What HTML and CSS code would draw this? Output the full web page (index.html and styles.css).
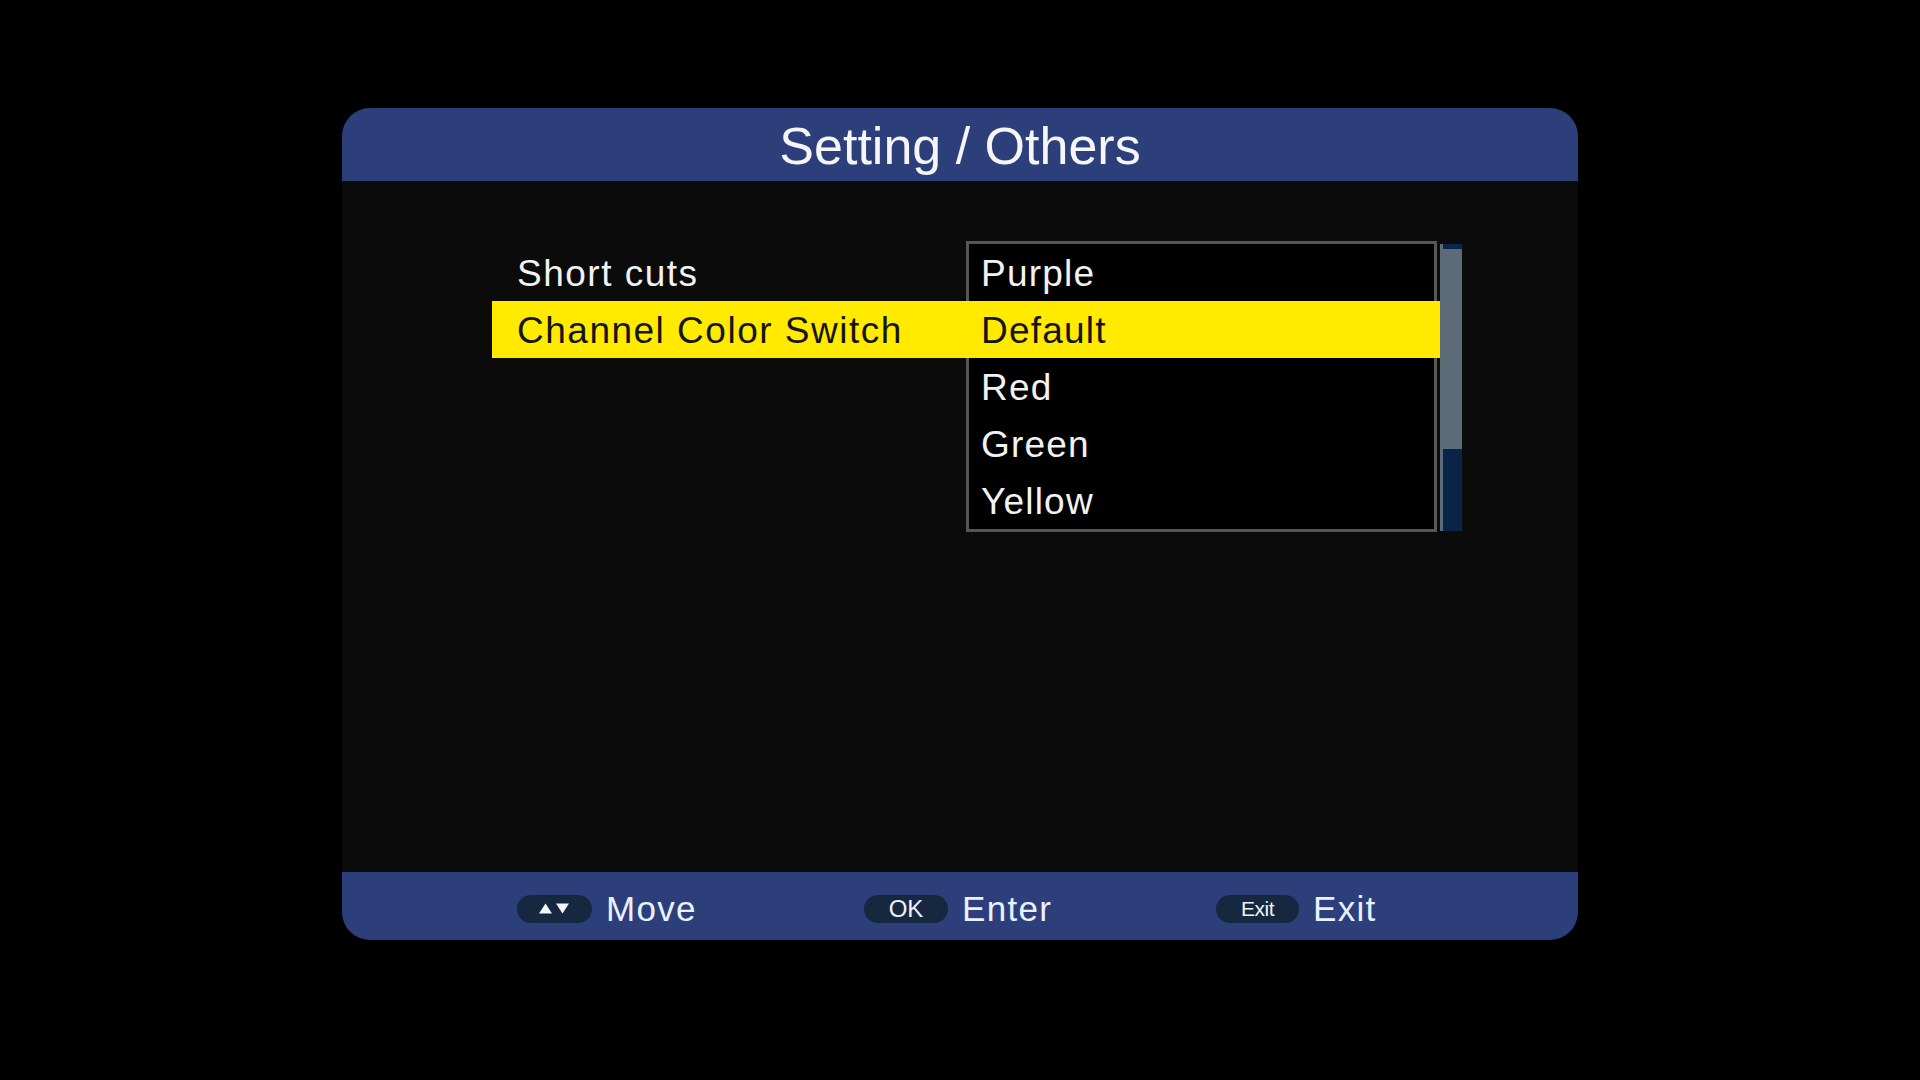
FILE: index.html
```html
<!DOCTYPE html>
<html lang="en">
<head>
<meta charset="utf-8">
<title>Setting / Others</title>
<link rel="stylesheet" href="styles.css">
</head>
<body>
<div class="panel">
  <div class="header">Setting / Others</div>
  <div class="content">
    <div class="rows">
      <div class="row">Short cuts</div>
      <div class="row row-sel">Channel Color Switch</div>
    </div>
    <div class="dropdown">
      <ul class="box">
        <li class="item">Purple</li>
        <li class="item item-sel">Default</li>
        <li class="item">Red</li>
        <li class="item">Green</li>
        <li class="item">Yellow</li>
      </ul>
      <div class="scrollbar">
        <div class="sb-top"></div>
        <div class="sb-track"></div>
        <div class="sb-bottom"></div>
      </div>
    </div>
  </div>
  <div class="footer">
    <div class="hint hint-move">
      <span class="key key-move"><svg width="32" height="11" viewBox="0 0 32 11"><polygon points="0,10.5 6.5,0.5 13,10.5" fill="#f4f6fa"/><polygon points="17,0.5 30,0.5 23.5,10.5" fill="#f4f6fa"/></svg></span>
      <span class="label">Move</span>
    </div>
    <div class="hint hint-enter">
      <span class="key key-ok">OK</span>
      <span class="label">Enter</span>
    </div>
    <div class="hint hint-exit">
      <span class="key key-exit">Exit</span>
      <span class="label">Exit</span>
    </div>
  </div>
</div>
</body>
</html>
```
FILE: styles.css
```css
html, body {
  margin: 0;
  padding: 0;
  background: #000;
}
body {
  width: 1920px;
  height: 1080px;
  padding: 108px 0 0 342px;
  box-sizing: border-box;
  font-family: "Liberation Sans", Arial, sans-serif;
  overflow: hidden;
}
.panel {
  width: 1236px;
  height: 832px;
  border-radius: 28px;
  overflow: hidden;
  background: #0b0b0b;
  display: flex;
  flex-direction: column;
}
.header {
  height: 73px;
  flex: none;
  background: #2c3f7a;
  color: #f6f6f8;
  font-size: 52px;
  display: flex;
  align-items: center;
  justify-content: center;
  padding-top: 2px;
  box-sizing: border-box;
}
.content {
  flex: 1;
  position: relative;
  padding: 63px 0 0 150px;
}
.rows {
  display: flex;
  flex-direction: column;
}
.row {
  width: 474px;
  height: 57px;
  box-sizing: border-box;
  padding-left: 25px;
  padding-top: 2px;
  display: flex;
  align-items: center;
  color: #f2f2f2;
  font-size: 37px;
  letter-spacing: 1.5px;
}
.row-sel {
  background: #ffea00;
  color: #151515;
}
.dropdown {
  position: absolute;
  left: 624px;
  top: 60px;
  display: flex;
  align-items: flex-start;
}
.box {
  list-style: none;
  margin: 0;
  padding: 0;
  width: 471px;
  box-sizing: border-box;
  border: 3px solid #565656;
  background: #000;
}
.item {
  height: 57px;
  box-sizing: border-box;
  display: flex;
  align-items: center;
  padding-left: 12px;
  padding-top: 2px;
  color: #f2f2f2;
  font-size: 37px;
  letter-spacing: 1.2px;
}
.item-sel {
  background: #ffea00;
  color: #151515;
  margin: 0 -6px 0 -3px;
  padding-left: 15px;
}
.scrollbar {
  margin-top: 3px;
  margin-left: 3px;
  width: 22px;
  height: 287px;
  display: flex;
  flex-direction: column;
  background: #5c6b78;
}
.sb-top {
  height: 5px;
  margin-left: 3px;
  background: #0b2550;
}
.sb-track {
  height: 200px;
  background: #5c6b78;
}
.sb-bottom {
  flex: 1;
  margin-left: 3px;
  background: #0a2449;
}
.footer {
  height: 68px;
  flex: none;
  background: #2c3f7a;
  display: flex;
  align-items: center;
  padding-left: 175px;
  padding-top: 5px;
  box-sizing: border-box;
}
.hint {
  display: flex;
  align-items: center;
  gap: 14px;
}
.hint-move { width: 347px; }
.hint-enter { width: 352px; }
.key {
  height: 28px;
  border-radius: 14px;
  background: #15283f;
  color: #eef2f8;
  display: flex;
  align-items: center;
  justify-content: center;
  box-sizing: border-box;
}
.key-move { width: 75px; }
.key-ok { width: 84px; font-size: 24px; }
.key-exit { width: 83px; font-size: 21px; letter-spacing: -0.5px; }
.label {
  color: #eaf0ff;
  font-size: 35px;
  letter-spacing: 1.3px;
}
```
